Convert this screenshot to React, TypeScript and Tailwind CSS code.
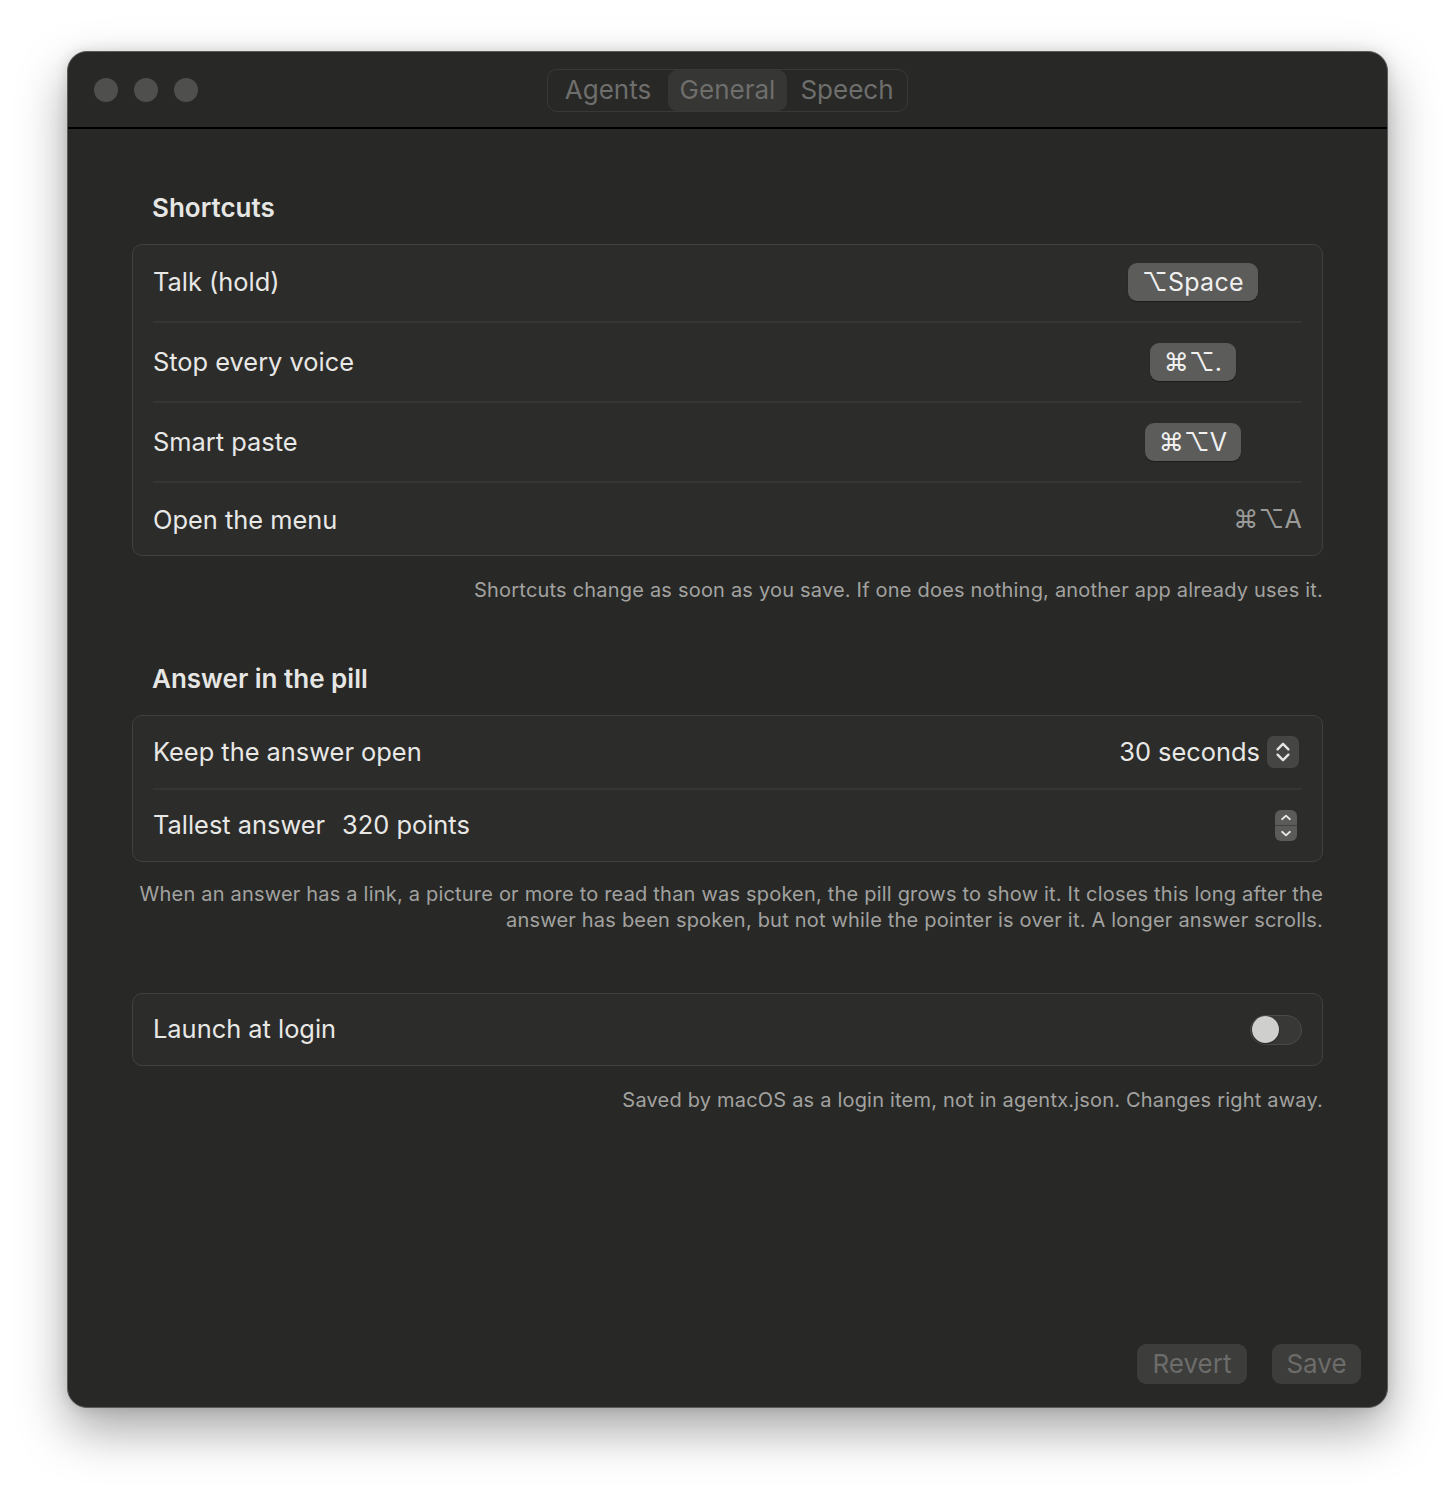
const font = { fontFamily: 'Inter, "Noto Sans", sans-serif' }

function Chevrons({ className }: { className?: string }) {
  return (
    <svg viewBox="0 0 16 24" className={className} fill="none" stroke="currentColor" strokeWidth="2.2" strokeLinecap="round" strokeLinejoin="round">
      <path d="M3 9.5 8 4.5l5 5" />
      <path d="M3 14.5 8 19.5l5-5" />
    </svg>
  )
}

function Key({ children }: { children: React.ReactNode }) {
  return (
    <span className="flex h-[38px] items-center rounded-[9px] bg-[#5c5c5a] px-[14px] text-[25px] leading-none tracking-[0.3px] text-[#f0f0f0] shadow-[0_1px_1px_rgba(0,0,0,0.35)]">
      {children}
    </span>
  )
}

function Divider() {
  return <div className="mx-5 h-[2px] bg-[#353533]" />
}

export default function App() {
  const shortcuts = [
    { label: 'Talk (hold)', keys: '⌥Space' },
    { label: 'Stop every voice', keys: '⌘⌥.' },
    { label: 'Smart paste', keys: '⌘⌥V' },
  ]

  return (
    <div className="min-h-[1492px] w-full bg-white pt-[51px] pl-[67px]" style={font}>
      <div className="flex h-[1357px] w-[1321px] flex-col overflow-hidden rounded-[20px] border border-[#5a5a58] bg-[#282826] shadow-[0_22px_50px_rgba(0,0,0,0.35),0_0_14px_rgba(0,0,0,0.12)]">
        {/* Title bar */}
        <div className="relative flex h-[77px] shrink-0 items-center border-b-2 border-black">
          <div className="ml-[26px] flex gap-4">
            <span className="h-6 w-6 rounded-full bg-[#4f4f4d]" />
            <span className="h-6 w-6 rounded-full bg-[#4f4f4d]" />
            <span className="h-6 w-6 rounded-full bg-[#4f4f4d]" />
          </div>
          <div className="absolute top-[17px] left-[479px] flex h-[43px] rounded-[10px] border border-[#393937] text-[26px] text-[#6e6e6c]">
            <div className="flex w-[120px] items-center justify-center pb-[2px]">Agents</div>
            <div className="flex w-[119px] items-center justify-center rounded-[9px] bg-[#363634] pb-[2px]">General</div>
            <div className="flex w-[120px] items-center justify-center pb-[2px]">Speech</div>
          </div>
        </div>

        {/* Content */}
        <div className="flex flex-1 flex-col px-[64px] pt-[63px] text-[#e8e8e6]">
          <h2 className="px-5 text-[26px] leading-8 font-semibold text-[#e6e6e4]">Shortcuts</h2>
          <div className="mt-5 rounded-[10px] border border-[#41413f] bg-[#2c2c2a]">
            {shortcuts.map((s) => (
              <div key={s.label}>
                <div className="flex h-[74px] items-center justify-between pr-5 pl-5">
                  <span className="text-[25.4px]">{s.label}</span>
                  <div className="flex w-[218px] justify-center">
                    <Key>{s.keys}</Key>
                  </div>
                </div>
                <div className="my-[2px]">
                  <Divider />
                </div>
              </div>
            ))}
            <div className="flex h-[70px] items-center justify-between px-5">
              <span className="text-[25.4px]">Open the menu</span>
              <span className="text-[25px] tracking-[0.3px] text-[#9a9a98]">⌘⌥A</span>
            </div>
          </div>
          <p className="mt-[21px] text-right text-[20px] leading-[26px] tracking-[0.2px] text-[#a2a2a0]">
            Shortcuts change as soon as you save. If one does nothing, another app already uses it.
          </p>

          <h2 className="mt-[60px] px-5 text-[26px] leading-8 font-semibold text-[#e6e6e4]">Answer in the pill</h2>
          <div className="mt-5 rounded-[10px] border border-[#41413f] bg-[#2c2c2a]">
            <div className="flex h-[72px] items-center justify-between px-5">
              <span className="text-[25.4px]">Keep the answer open</span>
              <div className="flex items-center gap-[7px] pr-[3px]">
                <span className="text-[25.4px]">30 seconds</span>
                <span className="flex h-8 w-8 items-center justify-center rounded-[7px] bg-[#454543] text-[#e6e6e6]">
                  <Chevrons className="h-[26px] w-[18px]" />
                </span>
              </div>
            </div>
            <Divider />
            <div className="flex h-[71px] items-center justify-between px-5">
              <span className="text-[25.4px]">
                Tallest answer<span className="ml-[17px]">320 points</span>
              </span>
              <span className="mr-[5px] flex h-[31px] w-[22px] flex-col overflow-hidden rounded-[6px] bg-[#5b5b59] text-[#e8e8e8]">
                <span className="flex flex-1 items-center justify-center border-b border-[#3f3f3d]">
                  <svg viewBox="0 0 12 8" className="h-[7px] w-[12px]" fill="none" stroke="currentColor" strokeWidth="2" strokeLinecap="round" strokeLinejoin="round">
                    <path d="M1.5 6 6 1.8 10.5 6" />
                  </svg>
                </span>
                <span className="flex flex-1 items-center justify-center">
                  <svg viewBox="0 0 12 8" className="h-[7px] w-[12px]" fill="none" stroke="currentColor" strokeWidth="2" strokeLinecap="round" strokeLinejoin="round">
                    <path d="M1.5 2 6 6.2 10.5 2" />
                  </svg>
                </span>
              </span>
            </div>
          </div>
          <p className="mt-[19px] text-right text-[20px] leading-[26px] tracking-[0.2px] text-[#a2a2a0]">
            When an answer has a link, a picture or more to read than was spoken, the pill grows to show it. It closes this long after the
            <br />
            answer has been spoken, but not while the pointer is over it. A longer answer scrolls.
          </p>

          <div className="mt-[60px] flex h-[73px] items-center justify-between rounded-[10px] border border-[#41413f] bg-[#2c2c2a] px-5">
            <span className="text-[25.4px]">Launch at login</span>
            <span className="flex h-[30px] w-[52px] items-center rounded-full border border-[#4a4a48] bg-[#383836] px-[1px]">
              <span className="h-[27px] w-[27px] rounded-full bg-[#cfcfcd] shadow-[0_1px_2px_rgba(0,0,0,0.4)]" />
            </span>
          </div>
          <p className="mt-[21px] text-right text-[20px] leading-[26px] tracking-[0.2px] text-[#a2a2a0]">
            Saved by macOS as a login item, not in agentx.json. Changes right away.
          </p>

          <div className="mt-auto -mr-[38px] mb-[23px] flex justify-end gap-[25px]">
            <button className="h-10 w-[110px] rounded-[9px] bg-[#3d3d3b] pb-[2px] text-[26px] text-[#6c6c6a]">Revert</button>
            <button className="h-10 w-[89px] rounded-[9px] bg-[#3d3d3b] pb-[2px] text-[26px] text-[#6c6c6a]">Save</button>
          </div>
        </div>
      </div>
    </div>
  )
}
